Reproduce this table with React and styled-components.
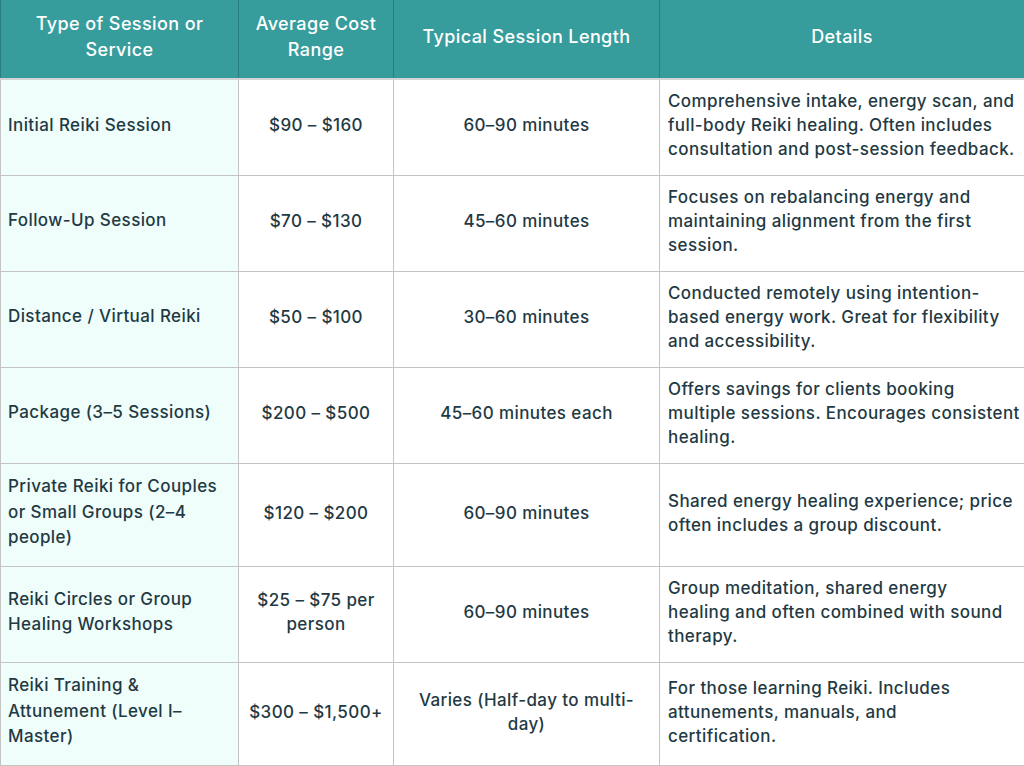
import React from 'react';
import styled, { createGlobalStyle } from 'styled-components';

const Global = createGlobalStyle`
  html, body {
    margin: 0;
    padding: 0;
    background: #ffffff;
  }
  body {
    font-family: Inter, "Noto Sans", sans-serif;
    color: #1f3a44;
  }
`;

const Table = styled.table`
  width: 1024px;
  border-collapse: collapse;
  table-layout: fixed;
  font-size: 17px;
  font-weight: 500;
  letter-spacing: 0.4px;
`;

const HeadCell = styled.th`
  box-sizing: border-box;
  background: #379c9c;
  color: #ffffff;
  font-weight: 500;
  font-size: 18px;
  line-height: 26px;
  height: 79px;
  padding: 0 8px 4px;
  text-align: center;
  vertical-align: middle;
  border: 1px solid #2c7e7e;
  border-top: none;
  border-bottom: 2px solid #d4d4d4;
`;

const Row = styled.tr`
  height: ${p => p.$h}px;
`;

const Cell = styled.td`
  border: 1px solid #c4c4c4;
  padding: 0 8px 4px;
  line-height: 24px;
  vertical-align: middle;
  white-space: ${p => (p.$lines ? 'pre' : 'normal')};
  text-align: ${p => (p.$center ? 'center' : 'left')};
  background: ${p => (p.$tint ? '#effdfb' : '#ffffff')};
  &:first-child {
    padding-left: 7px;
    line-height: 25.5px;
  }
`;

const rows = [
  ['Initial Reiki Session', '$90 – $160', '60–90 minutes', 'Comprehensive intake, energy scan, and\nfull-body Reiki healing. Often includes\nconsultation and post-session feedback.', 96],
  ['Follow-Up Session', '$70 – $130', '45–60 minutes', 'Focuses on rebalancing energy and\nmaintaining alignment from the first\nsession.', 96],
  ['Distance / Virtual Reiki', '$50 – $100', '30–60 minutes', 'Conducted remotely using intention-\nbased energy work. Great for flexibility\nand accessibility.', 96],
  ['Package (3–5 Sessions)', '$200 – $500', '45–60 minutes each', 'Offers savings for clients booking\nmultiple sessions. Encourages consistent\nhealing.', 96],
  ['Private Reiki for Couples or Small Groups (2–4 people)', '$120 – $200', '60–90 minutes', 'Shared energy healing experience; price\noften includes a group discount.', 103],
  ['Reiki Circles or Group Healing Workshops', '$25 – $75 per person', '60–90 minutes', 'Group meditation, shared energy\nhealing and often combined with sound\ntherapy.', 96],
  ['Reiki Training & Attunement (Level I–Master)', '$300 – $1,500+', 'Varies (Half-day to multi-day)', 'For those learning Reiki. Includes\nattunements, manuals, and\ncertification.', 103],
];

export default function App() {
  return (
    <>
      <Global />
      <Table>
        <colgroup>
          <col style={{ width: 238 }} />
          <col style={{ width: 155 }} />
          <col style={{ width: 266 }} />
          <col style={{ width: 365 }} />
        </colgroup>
        <thead>
          <tr>
            <HeadCell>Type of Session or Service</HeadCell>
            <HeadCell>Average Cost Range</HeadCell>
            <HeadCell>Typical Session Length</HeadCell>
            <HeadCell>Details</HeadCell>
          </tr>
        </thead>
        <tbody>
          {rows.map(([type, cost, len, details, h]) => (
            <Row key={type} $h={h}>
              <Cell $tint>{type}</Cell>
              <Cell $center>{cost}</Cell>
              <Cell $center>{len}</Cell>
              <Cell $lines>{details}</Cell>
            </Row>
          ))}
        </tbody>
      </Table>
    </>
  );
}
